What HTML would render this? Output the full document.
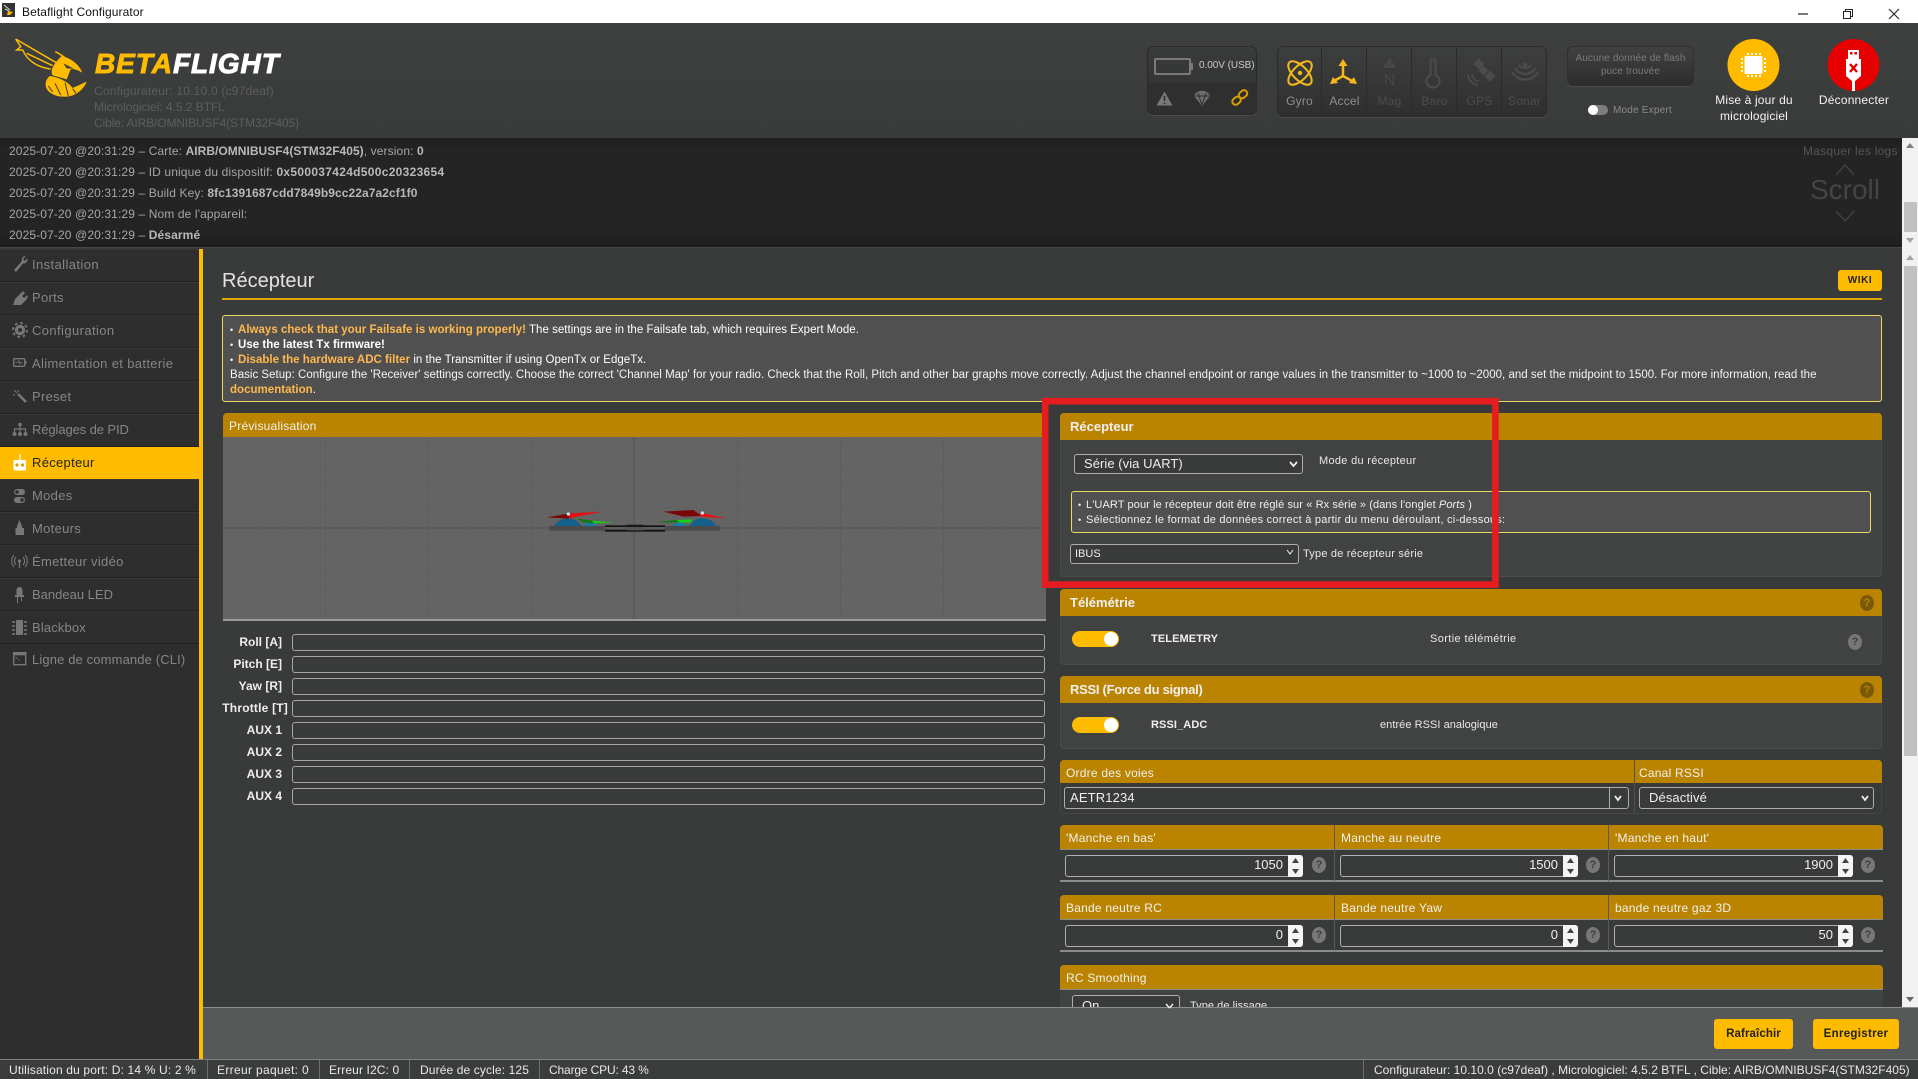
<!DOCTYPE html>
<html lang="fr"><head><meta charset="utf-8"><title>Betaflight Configurator</title>
<style>
html,body{margin:0;padding:0;width:1918px;height:1079px;overflow:hidden;background:#393b3a;font-family:"Liberation Sans",sans-serif;}
div{box-sizing:border-box;}
.a{position:absolute;}
.t{position:absolute;white-space:nowrap;line-height:16px;height:16px;}
.nav{position:absolute;left:0;width:199px;height:33px;background:#2d2e2d;border-bottom:1px solid #212221;box-shadow:inset 0 1px 0 #363736;}
.nt{position:absolute;left:32px;margin-top:1px;white-space:nowrap;line-height:16px;font-size:13px;letter-spacing:.3px;color:#858685;}
.log{position:absolute;left:9px;white-space:nowrap;line-height:16px;font-size:12px;letter-spacing:.12px;color:#a6a6a6;}
.log b{color:#b8b8b8;}
.hd{position:absolute;background:#bb8400;border-radius:4px 4px 0 0;}
.ht{position:absolute;margin-top:1px;white-space:nowrap;line-height:16px;color:#f0f0f0;font-size:12px;letter-spacing:.22px;}
.pn{position:absolute;background:#414342;border:1px solid #4b4d4c;border-radius:4px;}
.bar{position:absolute;left:292px;width:753px;height:17px;border:1px solid #a5a5a5;border-radius:3px;background:#393b3a;}
.bl{position:absolute;right:1636px;white-space:nowrap;font-weight:bold;font-size:12px;line-height:16px;color:#eee;}
.sel{position:absolute;background:#393b3a;border:1px solid #adadad;border-radius:3px;color:#eee;}
.inp{position:absolute;height:22px;background:#393b3a;border:1px solid #b0b0b0;border-radius:3px;}
.spin{position:absolute;width:15px;height:22px;background:#f4f4f4;border-radius:0 3px 3px 0;}
.v{position:absolute;font-size:13px;line-height:16px;color:#eee;text-align:right;white-space:nowrap;}
.q{position:absolute;width:14px;height:16px;border-radius:50%;background:#777;color:#3d3f3e;font:bold 11px/16px "Liberation Sans",sans-serif;text-align:center;}
.q2{background:#7a5a0a;color:#bb8400;}
.tog{position:absolute;width:47px;height:16px;border-radius:8px;background:#ffbb00;}
.tog i{position:absolute;right:1px;top:1px;width:14px;height:14px;border-radius:50%;background:#fff;}
.sep{position:absolute;top:1060px;width:1px;height:19px;background:#6e706f;}
.st{position:absolute;top:1062px;white-space:nowrap;font-size:12px;line-height:16px;color:#e8e8e8;letter-spacing:.02px;}
.sen{position:absolute;top:93px;width:45px;text-align:center;font-size:12px;line-height:16px;letter-spacing:.2px;}
.b{display:inline-block;width:8px;font-size:9px;}
</style></head><body>

<!-- title bar -->
<div class="a" style="left:0;top:0;width:1918px;height:23px;background:#fff"></div>
<div class="a" style="left:2px;top:3px;width:13px;height:14px;background:#333"></div>
<div class="t" style="left:22px;top:4px;font-size:12px;letter-spacing:.1px;color:#111">Betaflight Configurator</div>

<!-- header -->
<div class="a" style="left:0;top:23px;width:1918px;height:115px;background:linear-gradient(#3e403f,#393b3a)"></div>
<div class="t" style="left:95px;top:44px;height:40px;line-height:40px;font-size:28px;font-weight:bold;font-style:italic;letter-spacing:.95px;-webkit-text-stroke:.9px currentColor;color:#ffbb00">BETA<span style="color:#fff">FLIGHT</span></div>
<div class="t" style="left:94px;top:83px;font-size:12px;letter-spacing:.2px;color:#5d5f5e">Configurateur: 10.10.0 (c97deaf)</div>
<div class="t" style="left:94px;top:99px;font-size:12px;letter-spacing:-.05px;color:#5d5f5e">Micrologiciel: 4.5.2 BTFL</div>
<div class="t" style="left:94px;top:115px;font-size:12px;letter-spacing:-.12px;color:#5d5f5e">Cible: AIRB/OMNIBUSF4(STM32F405)</div>

<!-- battery group -->
<div class="a" style="left:1147px;top:46px;width:110px;height:69px;border-radius:6px;background:#2e2f2e;border:1px solid #2a2b2a;box-shadow:0 1px 0 #4a4c4b"></div>
<div class="a" style="left:1148px;top:47px;width:108px;height:36px;border-radius:6px 6px 0 0;background:linear-gradient(#3a3c3b,#343635)"></div>
<div class="a" style="left:1154px;top:58px;width:37px;height:17px;border:2px solid #7a7a7a;border-radius:2px"></div>
<div class="a" style="left:1191px;top:63px;width:2px;height:7px;background:#7a7a7a"></div>
<div class="t" style="left:1199px;top:58px;font-size:10px;letter-spacing:-.05px;color:#c8c8c8">0.00V (USB)</div>

<!-- sensors group -->
<div class="a" style="left:1277px;top:46px;width:270px;height:71px;border-radius:6px;background:linear-gradient(#3d3f3e,#2e2f2e);border:1px solid #2a2b2a;box-shadow:0 1px 0 #4a4c4b"></div>
<div class="a" style="left:1321px;top:47px;width:1px;height:69px;background:#2a2b2a"></div>
<div class="a" style="left:1366px;top:47px;width:1px;height:69px;background:#2a2b2a"></div>
<div class="a" style="left:1411px;top:47px;width:1px;height:69px;background:#2a2b2a"></div>
<div class="a" style="left:1456px;top:47px;width:1px;height:69px;background:#2a2b2a"></div>
<div class="a" style="left:1501px;top:47px;width:1px;height:69px;background:#2a2b2a"></div>
<div class="sen" style="left:1277px;color:#8e8f8e">Gyro</div>
<div class="sen" style="left:1322px;color:#8e8f8e">Accel</div>
<div class="sen" style="left:1367px;color:#4c4d4c">Mag</div>
<div class="sen" style="left:1412px;color:#4c4d4c">Baro</div>
<div class="sen" style="left:1457px;color:#4c4d4c">GPS</div>
<div class="sen" style="left:1502px;color:#4c4d4c">Sonar</div>

<!-- flash -->
<div class="a" style="left:1567px;top:46px;width:127px;height:40px;border-radius:6px;background:linear-gradient(#404241,#2c2d2c);border:1px solid #2e2f2e;box-shadow:0 1px 0 #4a4c4b"></div>
<div class="t" style="left:1567px;width:127px;top:51px;text-align:center;font-size:10px;color:#7a7b7a;letter-spacing:.1px">Aucune donnée de flash</div>
<div class="t" style="left:1567px;width:127px;top:64px;text-align:center;font-size:10px;color:#7a7b7a;letter-spacing:.1px">puce trouvée</div>
<div class="a" style="left:1588px;top:105px;width:20px;height:10px;border-radius:5px;background:#7d7d7d"></div>
<div class="a" style="left:1588px;top:105px;width:10px;height:10px;border-radius:50%;background:#fff"></div>
<div class="t" style="left:1613px;top:103px;font-size:10px;letter-spacing:.2px;color:#8a8b8a">Mode Expert</div>

<!-- big buttons -->
<div class="t" style="left:1694px;width:120px;top:92px;text-align:center;font-size:12px;color:#f4f4f4;letter-spacing:.15px">Mise à jour du</div>
<div class="t" style="left:1694px;width:120px;top:108px;text-align:center;font-size:12px;color:#f4f4f4;letter-spacing:.15px">micrologiciel</div>
<div class="t" style="left:1794px;width:120px;top:92px;text-align:center;font-size:12px;color:#f4f4f4;letter-spacing:.2px">Déconnecter</div>

<!-- log -->
<div class="a" style="left:0;top:138px;width:1902px;height:110px;background:linear-gradient(#1e1e1e,#242424 12%,#242424 85%,#1e1e1e);border-bottom:1px solid #454746"></div>
<div class="log" style="top:143px">2025-07-20 @20:31:29 – Carte: <b style="letter-spacing:.03px">AIRB/OMNIBUSF4(STM32F405)</b>, version: <b>0</b></div>
<div class="log" style="top:164px">2025-07-20 @20:31:29 – ID unique du dispositif: <b style="letter-spacing:.3px">0x500037424d500c20323654</b></div>
<div class="log" style="top:185px">2025-07-20 @20:31:29 – Build Key: <b style="letter-spacing:.08px">8fc1391687cdd7849b9cc22a7a2cf1f0</b></div>
<div class="log" style="top:206px">2025-07-20 @20:31:29 – Nom de l'appareil:</div>
<div class="log" style="top:227px">2025-07-20 @20:31:29 – <b>Désarmé</b></div>
<div class="t" style="left:1803px;top:143px;font-size:12px;letter-spacing:.25px;color:#555">Masquer les logs</div>
<div class="t" style="left:1805px;width:80px;top:170px;height:40px;line-height:40px;text-align:center;font-size:28px;color:#444544">Scroll</div>

<!-- sidebar -->
<div class="a" style="left:0;top:249px;width:199px;height:810px;background:#2d2e2d"></div>
<div class="a" style="left:199px;top:249px;width:4px;height:810px;background:#ffbb00"></div>
<div class="nav" style="top:249px"></div><div class="nt" style="top:256px;letter-spacing:.4px">Installation</div>
<div class="nav" style="top:282px"></div><div class="nt" style="top:289px">Ports</div>
<div class="nav" style="top:315px"></div><div class="nt" style="top:322px;letter-spacing:.4px">Configuration</div>
<div class="nav" style="top:348px"></div><div class="nt" style="top:355px;letter-spacing:.35px">Alimentation et batterie</div>
<div class="nav" style="top:381px"></div><div class="nt" style="top:388px">Preset</div>
<div class="nav" style="top:414px"></div><div class="nt" style="top:421px;letter-spacing:-.1px">Réglages de PID</div>
<div class="a" style="left:0;top:447px;width:199px;height:32px;background:#ffbb00"></div><div class="nt" style="top:454px;color:#222">Récepteur</div>
<div class="nav" style="top:479px"></div><div class="nt" style="top:487px">Modes</div>
<div class="nav" style="top:512px"></div><div class="nt" style="top:520px">Moteurs</div>
<div class="nav" style="top:545px"></div><div class="nt" style="top:553px">Émetteur vidéo</div>
<div class="nav" style="top:578px"></div><div class="nt" style="top:586px;letter-spacing:0">Bandeau LED</div>
<div class="nav" style="top:611px"></div><div class="nt" style="top:619px;letter-spacing:.15px">Blackbox</div>
<div class="nt" style="top:651px;letter-spacing:.13px">Ligne de commande (CLI)</div>

<!-- content -->
<div class="a" style="left:203px;top:248px;width:1699px;height:760px;background:#393b3a"></div>
<div class="t" style="left:222px;top:268px;height:26px;line-height:26px;font-size:20px;color:#e2e2e2">Récepteur</div>
<div class="a" style="left:222px;top:298px;width:1660px;height:2px;background:#e0a600"></div>
<div class="a" style="left:1838px;top:270px;width:44px;height:21px;background:#ffbb00;border-radius:3px;text-align:center;font:bold 10px/21px 'Liberation Sans',sans-serif;color:#222;letter-spacing:.6px">WIKI</div>

<div class="a" style="left:222px;top:315px;width:1660px;height:87px;background:#505050;border:1px solid #f0d565;border-radius:3px"></div>
<div class="t" style="left:230px;top:322px;font-size:11.5px;color:#fff;letter-spacing:.02px"><span class="b">•</span><b style="color:#ffb84d">Always check that your Failsafe is working properly!</b> The settings are in the Failsafe tab, which requires Expert Mode.</div>
<div class="t" style="left:230px;top:337px;font-size:11.5px;color:#fff;letter-spacing:.02px"><span class="b">•</span><b>Use the latest Tx firmware!</b></div>
<div class="t" style="left:230px;top:352px;font-size:11.5px;color:#fff;letter-spacing:.02px"><span class="b">•</span><b style="color:#ffb84d">Disable the hardware ADC filter</b> in the Transmitter if using OpenTx or EdgeTx.</div>
<div class="t" style="left:230px;top:367px;font-size:11.5px;color:#f4f4f4;letter-spacing:.02px">Basic Setup: Configure the 'Receiver' settings correctly. Choose the correct 'Channel Map' for your radio. Check that the Roll, Pitch and other bar graphs move correctly. Adjust the channel endpoint or range values in the transmitter to ~1000 to ~2000, and set the midpoint to 1500. For more information, read the</div>
<div class="t" style="left:230px;top:382px;font-size:11.5px;color:#fff;letter-spacing:.02px"><b style="color:#ffb84d">documentation</b>.</div>

<!-- preview -->
<div class="hd" style="left:223px;top:413px;width:823px;height:24px"></div>
<div class="ht" style="left:229px;top:417px">Prévisualisation</div>
<svg class="a" style="left:223px;top:437px" width="823" height="184" viewBox="223 437 823 184">
<defs>
<pattern id="mn" x="634" y="528" width="20.6" height="20.6" patternUnits="userSpaceOnUse"><path d="M0 0V20.6M0 0H20.6" stroke="#5e5e5e" stroke-width="1" fill="none"/></pattern>
<pattern id="mj" x="634" y="528" width="103" height="103" patternUnits="userSpaceOnUse"><path d="M0 0V103M0 0H103" stroke="#595959" stroke-width="1" fill="none"/></pattern>
</defs>
<rect x="223" y="437" width="823" height="184" fill="#646464"/>
<rect x="223" y="437" width="823" height="184" fill="url(#mn)"/>
<rect x="223" y="437" width="823" height="184" fill="url(#mj)"/>
<path d="M634 437V621M223 528H1046" stroke="#535353" stroke-width="1"/>
<rect x="223" y="619" width="823" height="2" fill="#9a9a9a"/>
<!-- drone: coordinates from the 3x crop -->
<g transform="translate(520 490) scale(.33333)">
<rect x="88" y="108" width="167" height="14" fill="#4a4a4a"/><rect x="435" y="108" width="165" height="14" fill="#4a4a4a"/>
<rect x="255" y="106" width="180" height="5" fill="#141414"/><rect x="255" y="119" width="180" height="6" fill="#141414"/>
<rect x="320" y="104" width="50" height="4" fill="#1c1c1c"/><rect x="320" y="111" width="50" height="10" fill="#555"/>
<path d="M100 108L118 92L135 85H152L170 92L185 108Z" fill="#13608c"/>
<path d="M188 108L198 98H220L232 108Z" fill="#1a7aa8"/>
<path d="M507 108L522 92L538 85H556L575 92L590 108Z" fill="#13608c"/>
<path d="M458 108L468 98H490L500 108Z" fill="#1a7aa8"/>
<path d="M80 82L150 70L148 86Z" fill="#7a0505"/>
<path d="M150 70L250 65L170 80L146 87Z" fill="#e80f0f"/>
<path d="M430 65L520 60L546 78L490 80Z" fill="#7a0505"/>
<path d="M540 68L620 85L540 80Z" fill="#ee1010"/>
<path d="M170 86L215 92L225 100L190 97Z" fill="#0f7a10"/>
<path d="M215 92L282 98L222 100Z" fill="#16d016"/>
<path d="M410 96L470 90L480 96L450 98Z" fill="#0f7a10"/>
<path d="M470 90L516 88L512 98H478Z" fill="#16d016"/>
<circle cx="145" cy="72" r="5" fill="#c8e0f0"/><circle cx="547" cy="69" r="5" fill="#c8e0f0"/>
</g>
</svg>

<!-- bars -->
<div class="bl" style="top:634px">Roll [A]</div><div class="bar" style="top:634px"></div>
<div class="bl" style="top:656px">Pitch [E]</div><div class="bar" style="top:656px"></div>
<div class="bl" style="top:678px">Yaw [R]</div><div class="bar" style="top:678px"></div>
<div class="bl" style="top:700px;right:1630px;letter-spacing:.2px">Throttle [T]</div><div class="bar" style="top:700px"></div>
<div class="bl" style="top:722px">AUX 1</div><div class="bar" style="top:722px"></div>
<div class="bl" style="top:744px">AUX 2</div><div class="bar" style="top:744px"></div>
<div class="bl" style="top:766px">AUX 3</div><div class="bar" style="top:766px"></div>
<div class="bl" style="top:788px">AUX 4</div><div class="bar" style="top:788px"></div>

<!-- Recepteur panel -->
<div class="pn" style="left:1060px;top:413px;width:822px;height:164px"></div>
<div class="hd" style="left:1060px;top:413px;width:822px;height:27px"></div>
<div class="ht" style="left:1070px;top:418px;font-size:13px;font-weight:bold;letter-spacing:0">Récepteur</div>
<div class="sel" style="left:1074px;top:454px;width:229px;height:20px;font-size:13px;line-height:18px;padding-left:9px;letter-spacing:.05px">Série (via UART)</div>
<div class="t" style="left:1319px;top:453px;font-size:11px;color:#e8e8e8;letter-spacing:.3px">Mode du récepteur</div>
<div class="a" style="left:1071px;top:491px;width:800px;height:42px;background:#505050;border:1px solid #f0d565;border-radius:3px"></div>
<div class="t" style="left:1078px;top:497px;font-size:11px;color:#f0f0f0;letter-spacing:.1px"><span class="b">•</span>L'UART pour le récepteur doit être réglé sur « Rx série » (dans l'onglet <i>Ports</i> )</div>
<div class="t" style="left:1078px;top:512px;font-size:11px;color:#f0f0f0;letter-spacing:.24px"><span class="b">•</span>Sélectionnez le format de données correct à partir du menu déroulant, ci-dessous:</div>
<div class="sel" style="left:1070px;top:544px;width:229px;height:20px;font-size:11px;line-height:18px;padding-left:4px">IBUS</div>
<div class="t" style="left:1303px;top:546px;font-size:11px;color:#e8e8e8;letter-spacing:.2px">Type de récepteur série</div>

<!-- Telemetry -->
<div class="pn" style="left:1060px;top:589px;width:822px;height:76px"></div>
<div class="hd" style="left:1060px;top:589px;width:822px;height:27px"></div>
<div class="ht" style="left:1070px;top:594px;font-size:13px;font-weight:bold;letter-spacing:0">Télémétrie</div>
<div class="q q2" style="left:1860px;top:595px">?</div>
<div class="tog" style="left:1072px;top:631px"><i></i></div>
<div class="t" style="left:1151px;top:631px;font-size:11px;font-weight:bold;color:#eee;letter-spacing:.1px">TELEMETRY</div>
<div class="t" style="left:1430px;top:631px;font-size:11px;color:#e8e8e8;letter-spacing:.38px">Sortie télémétrie</div>
<div class="q" style="left:1848px;top:634px">?</div>

<!-- RSSI -->
<div class="pn" style="left:1060px;top:676px;width:822px;height:73px"></div>
<div class="hd" style="left:1060px;top:676px;width:822px;height:27px"></div>
<div class="ht" style="left:1070px;top:681px;font-size:13px;font-weight:bold;letter-spacing:-.28px">RSSI (Force du signal)</div>
<div class="q q2" style="left:1860px;top:682px">?</div>
<div class="tog" style="left:1072px;top:717px"><i></i></div>
<div class="t" style="left:1151px;top:717px;font-size:11px;font-weight:bold;color:#eee;letter-spacing:.1px">RSSI_ADC</div>
<div class="t" style="left:1380px;top:717px;font-size:11px;color:#e8e8e8;letter-spacing:.05px">entrée RSSI analogique</div>

<!-- table 1 -->
<div class="a" style="left:1060px;top:760px;width:822px;height:54px;background:#393b3a;border:1px solid #454746;border-radius:4px"></div>
<div class="hd" style="left:1060px;top:760px;width:822px;height:23px"></div>
<div class="a" style="left:1634px;top:760px;width:1px;height:53px;background:#505251"></div>
<div class="ht" style="left:1066px;top:764px">Ordre des voies</div>
<div class="ht" style="left:1639px;top:764px">Canal RSSI</div>
<div class="sel" style="left:1064px;top:787px;width:565px;height:22px;font-size:13px;line-height:20px;padding-left:5px;letter-spacing:.15px">AETR1234</div>
<div class="a" style="left:1609px;top:787px;width:1px;height:22px;background:#adadad"></div>
<div class="sel" style="left:1639px;top:787px;width:235px;height:22px;font-size:13px;line-height:20px;padding-left:9px;letter-spacing:.1px">Désactivé</div>

<!-- table 2 -->
<div class="a" style="left:1060px;top:825px;width:823px;height:57px;background:#393b3a;border-bottom:2px solid #8a8c8b;border-radius:4px 4px 0 0"></div>
<div class="hd" style="left:1060px;top:825px;width:823px;height:25px;border-bottom:1px solid #8a8c8b"></div>
<div class="a" style="left:1334px;top:825px;width:1px;height:56px;background:#595b5a"></div>
<div class="a" style="left:1608px;top:825px;width:1px;height:56px;background:#595b5a"></div>
<div class="ht" style="left:1066px;top:829px">'Manche en bas'</div>
<div class="ht" style="left:1341px;top:829px">Manche au neutre</div>
<div class="ht" style="left:1615px;top:829px">'Manche en haut'</div>
<div class="inp" style="left:1065px;top:855px;width:238px"></div><div class="spin" style="left:1288px;top:855px"></div><div class="v" style="right:635px;top:857px">1050</div><div class="q" style="left:1312px;top:857px">?</div>
<div class="inp" style="left:1340px;top:855px;width:238px"></div><div class="spin" style="left:1563px;top:855px"></div><div class="v" style="right:360px;top:857px">1500</div><div class="q" style="left:1586px;top:857px">?</div>
<div class="inp" style="left:1614px;top:855px;width:239px"></div><div class="spin" style="left:1838px;top:855px"></div><div class="v" style="right:85px;top:857px">1900</div><div class="q" style="left:1861px;top:857px">?</div>

<!-- table 3 -->
<div class="a" style="left:1060px;top:895px;width:823px;height:57px;background:#393b3a;border-bottom:2px solid #8a8c8b;border-radius:4px 4px 0 0"></div>
<div class="hd" style="left:1060px;top:895px;width:823px;height:25px;border-bottom:1px solid #8a8c8b"></div>
<div class="a" style="left:1334px;top:895px;width:1px;height:56px;background:#595b5a"></div>
<div class="a" style="left:1608px;top:895px;width:1px;height:56px;background:#595b5a"></div>
<div class="ht" style="left:1066px;top:899px">Bande neutre RC</div>
<div class="ht" style="left:1341px;top:899px">Bande neutre Yaw</div>
<div class="ht" style="left:1615px;top:899px">bande neutre gaz 3D</div>
<div class="inp" style="left:1065px;top:925px;width:238px"></div><div class="spin" style="left:1288px;top:925px"></div><div class="v" style="right:635px;top:927px">0</div><div class="q" style="left:1312px;top:927px">?</div>
<div class="inp" style="left:1340px;top:925px;width:238px"></div><div class="spin" style="left:1563px;top:925px"></div><div class="v" style="right:360px;top:927px">0</div><div class="q" style="left:1586px;top:927px">?</div>
<div class="inp" style="left:1614px;top:925px;width:239px"></div><div class="spin" style="left:1838px;top:925px"></div><div class="v" style="right:85px;top:927px">50</div><div class="q" style="left:1861px;top:927px">?</div>

<!-- table 4 -->
<div class="a" style="left:1060px;top:989px;width:823px;height:20px;background:#414342"></div>
<div class="hd" style="left:1060px;top:965px;width:823px;height:25px;border-bottom:1px solid #8a8c8b"></div>
<div class="ht" style="left:1066px;top:969px">RC Smoothing</div>
<div class="sel" style="left:1072px;top:995px;width:108px;height:22px;font-size:13px;line-height:20px;padding-left:9px">On</div>
<div class="t" style="left:1190px;top:998px;font-size:11px;color:#e8e8e8;letter-spacing:.05px">Type de lissage</div>

<!-- scrollbars -->
<div class="a" style="left:1902px;top:138px;width:16px;height:870px;background:#f1f1f1"></div>
<div class="a" style="left:1904px;top:202px;width:13px;height:30px;background:#c1c1c1"></div>
<div class="a" style="left:1904px;top:266px;width:13px;height:490px;background:#c1c1c1"></div>

<!-- toolbar -->
<div class="a" style="left:203px;top:1007px;width:1715px;height:52px;background:#575958;border-top:1px solid #8d8f8e"></div>
<div class="a" style="left:1714px;top:1019px;width:79px;height:30px;background:#ffbb00;border-radius:3px;text-align:center;font:bold 11.5px/31px 'Liberation Sans',sans-serif;color:#222;letter-spacing:.1px">Rafraîchir</div>
<div class="a" style="left:1813px;top:1019px;width:86px;height:30px;background:#ffbb00;border-radius:3px;text-align:center;font:bold 11.5px/31px 'Liberation Sans',sans-serif;color:#222;letter-spacing:.3px">Enregistrer</div>

<!-- status -->
<div class="a" style="left:0;top:1059px;width:1918px;height:20px;background:#3b3d3c;border-top:1px solid #808281"></div>
<div class="st" style="left:9px;letter-spacing:.16px">Utilisation du port: D: 14 % U: 2 %</div><div class="sep" style="left:207px"></div>
<div class="st" style="left:217px;letter-spacing:.33px">Erreur paquet: 0</div><div class="sep" style="left:319px"></div>
<div class="st" style="left:329px;letter-spacing:.12px">Erreur I2C: 0</div><div class="sep" style="left:409px"></div>
<div class="st" style="left:420px;letter-spacing:.12px">Durée de cycle: 125</div><div class="sep" style="left:539px"></div>
<div class="st" style="left:549px;letter-spacing:-.15px">Charge CPU: 43 %</div>
<div class="sep" style="left:1363px"></div>
<div class="st" style="left:1374px">Configurateur: 10.10.0 (c97deaf) , Micrologiciel: 4.5.2 BTFL , Cible: AIRB/OMNIBUSF4(STM32F405)</div>

<!-- icon overlay, page coordinates -->
<svg class="a" style="left:0;top:0;pointer-events:none" width="1918" height="1079" viewBox="0 0 1918 1079">
<!-- app icon -->
<path d="M4 5L10 10M5 9L9 11" stroke="#d8d8d8" stroke-width="1" fill="none"/><path d="M8 11L13 12L10 15H7Z" fill="#ffbb00"/>
<!-- window controls -->
<path d="M1798 14H1808" stroke="#222" stroke-width="1.2"/>
<path d="M1843.5 11.5H1850.5V18.5H1843.5ZM1845.5 11.5V9.5H1852.5V16.5H1850.5" fill="none" stroke="#222"/>
<path d="M1889 9L1899 19M1899 9L1889 19" stroke="#222" stroke-width="1.1"/>

<!-- bee logo -->
<g transform="scale(.33333)">
<g fill="none" stroke="#ffbb00" stroke-width="4.5">
<path d="M47 117L172 190"/><path d="M47 117L62 140L50 150L68 150C82 182 112 202 152 207"/><path d="M80 160L158 197"/><path d="M166 155C180 162 192 170 200 178"/>
</g>
<path d="M185 168C215 175 238 195 247 218C232 210 222 206 212 208L200 238L158 226C150 212 160 192 185 168Z" fill="#ffbb00"/>
<path d="M190 190L222 206L200 205Z" fill="#3b3d3c"/>
<path d="M150 228C178 232 205 246 218 264L260 245C250 270 225 292 190 290C160 290 134 272 137 250C138 240 143 233 150 228Z" fill="#ffbb00"/>
<path d="M165 250L182 285M195 248L205 288M218 266L228 280M145 258L158 276" stroke="#3b3d3c" stroke-width="3" fill="none"/>
</g>

<!-- status icons -->
<path d="M1164.5 91.5L1172.5 105.5H1156.5Z" fill="#777"/><path d="M1164.5 96V101M1164.5 102.5V104" stroke="#2e2f2e" stroke-width="1.6"/>
<path d="M1194 96C1196 89 1208 89 1210 96L1202 106Z" fill="#6e6e6e"/><path d="M1198 93L1202 105M1206 93L1202 105M1194.5 96H1209.5" stroke="#2e2f2e" stroke-width="1"/>
<g fill="none" stroke="#d89f00" stroke-width="2" stroke-linecap="round"><rect x="1238.5" y="91" width="9" height="6.5" rx="3.2" transform="rotate(-40 1243 94.2)"/><rect x="1232" y="97.5" width="9" height="6.5" rx="3.2" transform="rotate(-40 1236.5 100.7)"/></g>

<!-- chevrons -->
<path d="M1836 175L1845 165L1854 175M1836 211L1845 221L1854 211" fill="none" stroke="#444544" stroke-width="1.3"/>

<!-- sensors -->
<g fill="none" stroke="#f5b91e" stroke-width="2"><ellipse cx="1300" cy="73" rx="15" ry="7" transform="rotate(45 1300 73)"/><ellipse cx="1300" cy="73" rx="15" ry="7" transform="rotate(-45 1300 73)"/><circle cx="1300" cy="73" r="2.2" fill="#f5b91e" stroke="none"/></g>
<g stroke="#f5b91e" stroke-width="2.5" fill="#f5b91e"><path d="M1343 64V76M1343 76L1332 82M1343 76L1354 82" fill="none"/><path d="M1343 59L1347.5 66H1338.5Z" stroke="none"/><path d="M1330 84L1333 77L1338 83Z" stroke="none"/><path d="M1357 84L1354 77L1349 83Z" stroke="none"/></g>
<path d="M1389.5 57L1396 68H1383Z" fill="#464746"/><text x="1389.5" y="85" text-anchor="middle" font-family="Liberation Sans, sans-serif" font-size="16" fill="#464746">N</text>
<g fill="none" stroke="#4a4b4a" stroke-width="2.2"><path d="M1430.5 61C1430.5 59 1435.5 59 1435.5 61V75A6.5 6.5 0 1 1 1430.5 75Z"/></g>
<g fill="#4a4b4a"><rect x="1475" y="60" width="8" height="8" transform="rotate(40 1479 64)"/><rect x="1486" y="72" width="8" height="8" transform="rotate(40 1490 76)"/><rect x="1480" y="67" width="7" height="7" transform="rotate(40 1483.5 70.5)"/><path d="M1468 75A11 11 0 0 0 1478 85M1472 74A7 7 0 0 0 1479 81" fill="none" stroke="#4a4b4a" stroke-width="1.8"/></g>
<g fill="none" stroke="#4a4b4a" stroke-width="2.2"><path d="M1512 72C1517 82 1533 82 1538 72M1515 68C1519 76 1531 76 1535 68M1519 65C1522 69 1528 69 1531 65"/></g><circle cx="1525" cy="65" r="2.4" fill="#4a4b4a"/>

<!-- firmware button -->
<circle cx="1753.5" cy="65" r="26" fill="#ffbb00"/>
<rect x="1744.5" y="56" width="18" height="18" rx="1.5" fill="#fff"/>
<path d="M1748 53V55M1752 53V55M1756 53V55M1760 53V55M1748 75V77M1752 75V77M1756 75V77M1760 75V77M1741 59H1743M1741 63H1743M1741 67H1743M1741 71H1743M1764 59H1766M1764 63H1766M1764 67H1766M1764 71H1766" stroke="#fff" stroke-width="2"/>
<!-- disconnect button -->
<circle cx="1853.5" cy="65" r="26" fill="#e60000"/>
<rect x="1848" y="50" width="11" height="9" fill="#fff"/><rect x="1850" y="52" width="2.5" height="2.5" fill="#e60000"/><rect x="1854.5" y="52" width="2.5" height="2.5" fill="#e60000"/>
<path d="M1846 59H1861V76L1855 81V91H1852V81L1846 76Z" fill="#fff"/>
<path d="M1850 64L1857 72M1857 64L1850 72" stroke="#e60000" stroke-width="2.4"/>

<!-- sidebar icons -->
<g fill="#777" stroke="none">
<path d="M14 270L22 261C21 258 23 256 26 256L23 259L25 261L27.5 258C28 261 26 264 23 263.5L16 272Z"/>
<path d="M13 304L15 298L20 293L26 299L21 304L16 304ZM20 293L23 290L25 292L22 295ZM24 297L27 294L28 296L26 299Z" transform="translate(0 1)"/>
<circle cx="20" cy="330" r="5.2"/><circle cx="20" cy="330" r="7" fill="none" stroke="#777" stroke-width="2" stroke-dasharray="2.6 2.9"/><circle cx="20" cy="330" r="2" fill="#2d2e2d"/>
<rect x="13.7" y="358.7" width="11" height="7.6" rx="1" fill="none" stroke="#777" stroke-width="1.4"/><rect x="25" y="361" width="1.5" height="3"/><path d="M15.5 362.5H18L19 360.5L20 364L21 362.5H23" fill="none" stroke="#777" stroke-width=".8"/>
<path d="M18 394L26 402" stroke="#777" stroke-width="2.6"/><path d="M14 390L17 393M19 390L17.5 392M13 395L15 394.5" stroke="#777" stroke-width="1"/>
<circle cx="20" cy="424.5" r="1.8"/><circle cx="14.5" cy="434" r="2"/><circle cx="20" cy="434" r="2"/><circle cx="25.5" cy="434" r="2"/><path d="M20 426V432M14.5 432V429H25.5V432" fill="none" stroke="#777" stroke-width="1.2"/>
<rect x="14" y="489" width="11" height="6" rx="3"/><circle cx="17" cy="492" r="1.8" fill="#2d2e2d"/><rect x="14" y="497" width="11" height="6" rx="3"/><circle cx="22" cy="500" r="1.8" fill="#2d2e2d"/>
<path d="M19.5 520L22 526V528H24V535H15.5V528H17V526Z"/>
<circle cx="19.5" cy="561" r="1.6"/><path d="M19.5 562V568" stroke="#777" stroke-width="1.4"/><path d="M16 557C14 559 14 563 16 565M23 557C25 559 25 563 23 565M14 555C11 558 11 564 14 567M25 555C28 558 28 564 25 567" fill="none" stroke="#777" stroke-width="1.1"/>
<path d="M16.5 596V590C16.5 586 22.5 586 22.5 590V596Z"/><rect x="15" y="595" width="9" height="2"/><path d="M17.5 597V603M21.5 597V601" stroke="#777" stroke-width="1"/>
<rect x="16" y="620" width="7" height="15" rx=".8"/><path d="M12 622H15M12 626H15M12 630H15M12 634H15M24 622H27M24 626H27M24 630H27M24 634H27" stroke="#777" stroke-width="1.6"/>
<rect x="13.7" y="652.7" width="12" height="12" fill="none" stroke="#777" stroke-width="1.4"/><rect x="13.7" y="652.7" width="12" height="2.6"/><path d="M15.5 657L17 658L15.5 659M18 660H20" stroke="#777" stroke-width=".7" fill="none"/>
</g>
<!-- active receiver icon -->
<rect x="13.5" y="460" width="12.5" height="10.5" rx="1.5" fill="#fff"/><path d="M20 454V460" stroke="#fff" stroke-width="1.2"/><circle cx="17" cy="465" r="1.6" fill="#d89f00"/><circle cx="22.5" cy="465" r="1.6" fill="#d89f00"/>

<!-- scrollbar arrows -->
<g fill="#7d7d7d"><path d="M1910 143L1914 148H1906Z"/><path d="M1910 243L1914 238H1906Z" fill="#a3a3a3"/><path d="M1910 255L1914 260H1906Z" fill="#a3a3a3"/><path d="M1910 1002L1914 997H1906Z" fill="#666"/></g>

<!-- select chevrons -->
<g fill="none" stroke="#eee" stroke-width="1.8">
<path d="M1290 462L1293.5 466L1297 462"/><path d="M1287 550L1290 554L1293 550" stroke-width="1"/>
<path d="M1615 796L1618 800L1621 796"/><path d="M1862 796L1865 800L1868 796"/>
<path d="M1166 1004L1169.5 1008" stroke-width="1.5"/><path d="M1169.5 1008L1173 1004" stroke-width="1.5"/>
</g>
<!-- spinner arrows -->
<g fill="#444">
<path d="M1295.5 858L1299 863H1292Z"/><path d="M1295.5 874L1299 869H1292Z"/><path d="M1570.5 858L1574 863H1567Z"/><path d="M1570.5 874L1574 869H1567Z"/><path d="M1845.5 858L1849 863H1842Z"/><path d="M1845.5 874L1849 869H1842Z"/>
<path d="M1295.5 928L1299 933H1292Z"/><path d="M1295.5 944L1299 939H1292Z"/><path d="M1570.5 928L1574 933H1567Z"/><path d="M1570.5 944L1574 939H1567Z"/><path d="M1845.5 928L1849 933H1842Z"/><path d="M1845.5 944L1849 939H1842Z"/>
</g>
<!-- red annotation rectangle -->
<path d="M1045.2 401.2H1495.4V584.6H1045.2Z" fill="none" stroke="#e61c20" stroke-width="6.6"/>
</svg>
</body></html>
